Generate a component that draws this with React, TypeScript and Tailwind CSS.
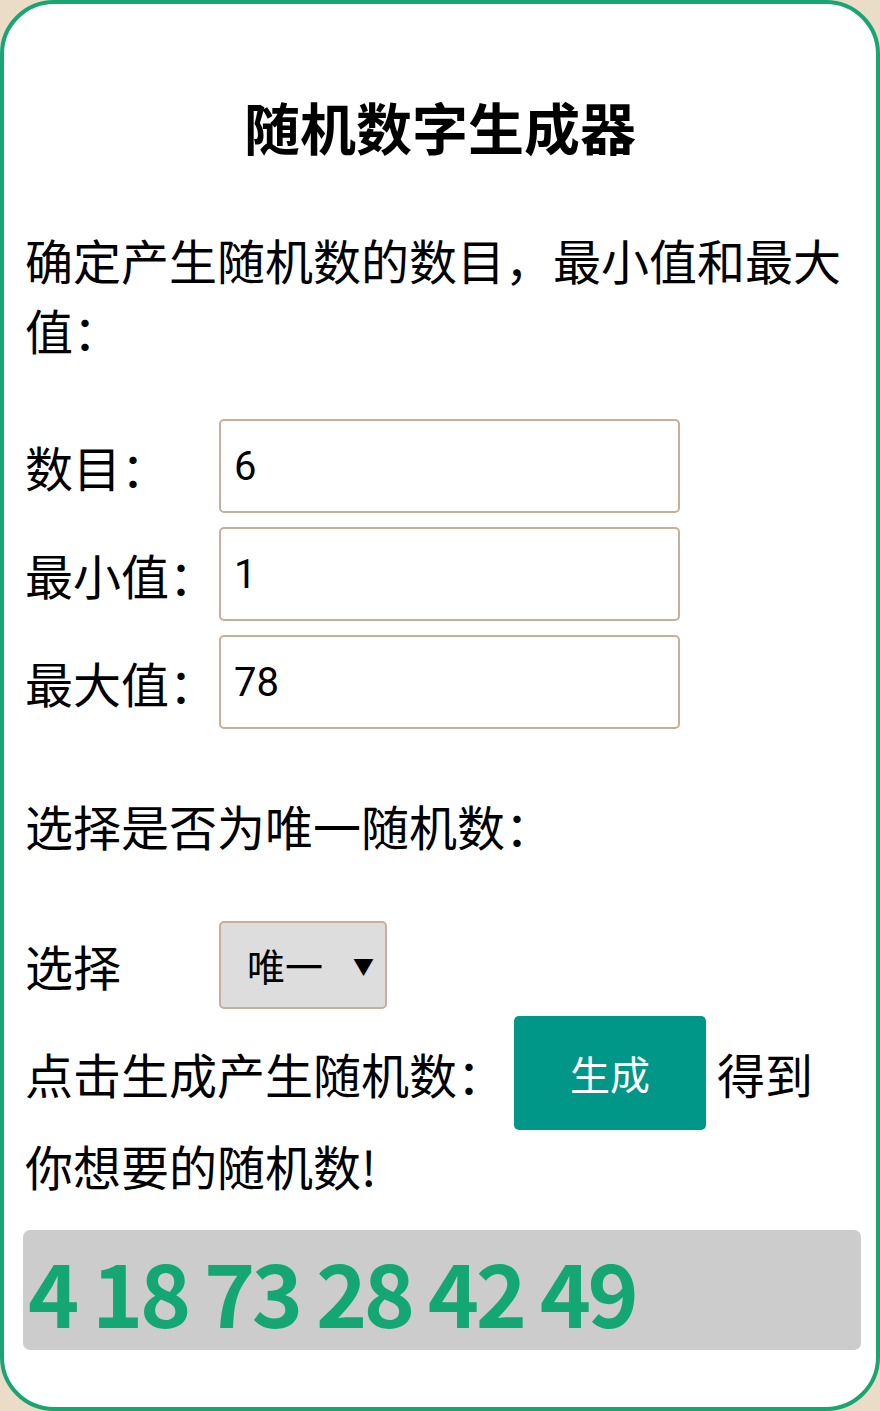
import { useState } from 'react';

const cjk = { fontFamily: '"Noto Sans CJK SC", "Noto Sans", sans-serif' };

function Field({ label, value }: { label: string; value: string }) {
    return (
        <>
            <label className="text-[48px] leading-[70px] text-black">{label}</label>
            <input
                defaultValue={value}
                className="h-[94px] w-[461px] rounded-[5px] border-2 border-[#c9ae99] bg-white px-[13px] text-[40px] text-black outline-none font-['Roboto',sans-serif]"
            />
        </>
    );
}

export default function App() {
    const [nums] = useState([4, 18, 73, 28, 42, 49]);

    return (
        <div className="min-h-[1411px] w-full bg-[#eadcc6]" style={cjk}>
            <div className="h-[1411px] w-[880px] rounded-[54px] border-4 border-[#17a571] bg-white px-[21px] pt-[88px]">
                <h1 className="text-center text-[56px] font-bold leading-[67px] text-black">随机数字生成器</h1>

                <p className="mt-[65px] text-[48px] leading-[70px] text-black">确定产生随机数的数目，最小值和最大值：</p>

                <div className="mt-[55px] grid grid-cols-[194px_461px] items-center gap-y-[14px]">
                    <Field label="数目：" value="6" />
                    <Field label="最小值：" value="1" />
                    <Field label="最大值：" value="78" />
                </div>

                <p className="mt-[61px] text-[48px] leading-[70px] text-black">选择是否为唯一随机数：</p>

                <div className="mt-[61px] grid grid-cols-[194px_168px] items-center">
                    <span className="text-[48px] leading-[70px] text-black">选择</span>
                    <div className="flex h-[88px] w-[168px] items-center rounded-[5px] border-2 border-[#c9ae99] bg-[#dddddd] pl-[26px] text-black">
                        <span className="text-[38px] leading-none">唯一</span>
                        <span className="ml-[30px] text-[21px] leading-none">▼</span>
                    </div>
                </div>

                <div className="mt-[7px] flex items-center">
                    <span className="text-[48px] leading-[70px] text-black">点击生成产生随机数：</span>
                    <button className="ml-[9px] h-[114px] w-[192px] rounded-[5px] bg-[#009688] text-[40px] text-white">生成</button>
                    <span className="ml-[11px] text-[48px] leading-[70px] text-black">得到</span>
                </div>
                <p className="text-[48px] leading-[70px] text-black">你想要的随机数!</p>

                <div className="-ml-[2px] mt-[30px] flex h-[120px] w-[838px] items-center rounded-[7px] bg-[#cccccc] pl-[5px]">
                    <span className="text-[87px] font-bold leading-none tracking-[-3.5px] text-[#14a673]">{nums.join(' ')}</span>
                </div>
            </div>
        </div>
    );
}
